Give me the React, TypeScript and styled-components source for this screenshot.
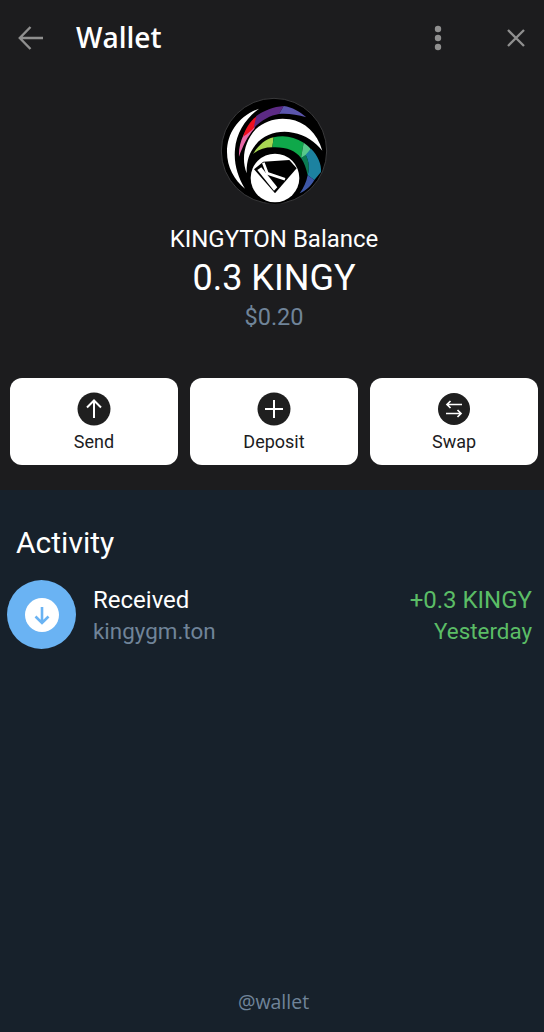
import React from "react";
import styled, { createGlobalStyle } from "styled-components";

const Global = createGlobalStyle`
  html, body { margin: 0; padding: 0; background: #17212b; }
  * { box-sizing: border-box; }
  #root { font-family: Roboto, sans-serif; }
`;

const Page = styled.div`
  width: 544px;
  height: 1032px;
  display: flex;
  flex-direction: column;
  overflow: hidden;
  background: #17212b;
`;

const Top = styled.section`
  height: 490px;
  background: #1c1c1e;
  display: flex;
  flex-direction: column;
`;

const Header = styled.header`
  height: 75px;
  display: flex;
  align-items: center;
  padding: 0 18px 0 18px;
`;

const HeaderIcon = styled.svg`
  display: block;
  flex: none;
  color: #8f8f8f;
`;

const HeaderTitle = styled.h1`
  flex: 1;
  margin: -2px 0 0 32px;
  color: #fff;
  font: 600 28px/32px "Open Sans", sans-serif;
`;

const CloseWrap = styled.span`
  display: block;
  margin-left: 64px;
`;

const Balance = styled.div`
  display: flex;
  flex-direction: column;
  align-items: center;
  padding: 17px 0 0 4px;
`;

const Logo = styled.svg`
  display: block;
  width: 118px;
  height: 118px;
`;

const BalanceLabel = styled.div`
  margin-top: 15px;
  color: #fff;
  font-size: 24px;
  line-height: 28px;
`;

const BalanceValue = styled.div`
  margin-top: 3px;
  color: #fff;
  font-size: 36px;
  line-height: 44px;
`;

const BalanceFiat = styled.div`
  margin-top: 3px;
  color: #708499;
  font-size: 23.5px;
  line-height: 28px;
`;

const Actions = styled.div`
  margin-top: 47px;
  padding: 0 6px 0 10px;
  display: grid;
  grid-template-columns: repeat(3, 168px);
  gap: 12px;
`;

const ActionCard = styled.button`
  height: 87px;
  border: 0;
  padding: 14px 0 0;
  border-radius: 12px;
  background: #fff;
  color: #1c1c1e;
  display: flex;
  flex-direction: column;
  align-items: center;
  font: 400 18px/22px Roboto, sans-serif;
`;

const ActionIcon = styled.svg`
  display: block;
  width: 34px;
  height: 34px;
  margin-bottom: 5px;
`;

const Activity = styled.section`
  flex: 1;
  display: flex;
  flex-direction: column;
  padding: 35px 12px 0 7px;
`;

const ActivityTitle = styled.h2`
  margin: 0 0 0 9px;
  color: #fff;
  font: 400 30px/36px Roboto, sans-serif;
`;

const Row = styled.div`
  margin-top: 19px;
  display: flex;
  align-items: center;
`;

const Avatar = styled.svg`
  display: block;
  flex: none;
  width: 69px;
  height: 69px;
`;

const RowMain = styled.div`
  flex: 1;
  margin-left: 17px;
`;

const RowSide = styled.div`
  text-align: right;
`;

const PrimaryLine = styled.div<{ $color: string }>`
  color: ${(p) => p.$color};
  font-size: 24px;
  line-height: 34px;
`;

const SecondaryLine = styled.div<{ $color: string }>`
  color: ${(p) => p.$color};
  font-size: 22.4px;
  line-height: 28px;
  margin-bottom: 2px;
`;

const Footer = styled.footer`
  margin-top: auto;
  margin-left: -7px;
  margin-right: -12px;
  padding: 0 0 18px 3px;
  text-align: center;
  color: #708499;
  font: 400 19.5px/24px "Open Sans", sans-serif;
`;

const BackIcon = () => (
  <HeaderIcon width="26" height="26" viewBox="0 0 26 26" fill="none" stroke="currentColor" strokeWidth="2.4">
    <path d="M25 13H2M12.5 2 1.8 13l10.7 11" />
  </HeaderIcon>
);

const MoreIcon = () => (
  <HeaderIcon width="8" height="26" viewBox="0 0 8 26" fill="currentColor">
    <circle cx="4" cy="4" r="3.2" />
    <circle cx="4" cy="13" r="3.2" />
    <circle cx="4" cy="22" r="3.2" />
  </HeaderIcon>
);

const CloseIcon = () => (
  <HeaderIcon width="20" height="20" viewBox="0 0 20 20" fill="none" stroke="currentColor" strokeWidth="2.3">
    <path d="M2 2l16 16M18 2 2 18" />
  </HeaderIcon>
);

const KingyLogo = () => (
  <Logo viewBox="0 0 354 354">
    <circle cx="177" cy="177" r="158" fill="#000" stroke="#3a3a3c" strokeWidth="3" />
    {/* outer white crescent */}
    <path d="M132 50C72 72 36 122 36 180c0 46 22 84 54 110C68 254 56 214 60 172 64 122 92 80 132 50Z" fill="#fff" />
    {/* coloured band */}
    <path d="M72 194C70 150 90 110 126 76L118 110C98 132 84 160 72 194Z" fill="#e668a7" />
    <path d="M84 134C92 108 106 86 126 72L122 102C112 114 98 126 84 134Z" fill="#ee0f1f" />
    <path d="M124 72C146 56 176 44 206 42L192 66C166 70 140 84 116 108Z" fill="#5c2a84" />
    <path d="M206 42C232 46 254 58 274 76 246 68 220 64 192 66Z" fill="#5b55ad" />
    {/* inner white crescent */}
    <path d="M95 244C78 200 88 150 122 112 150 86 186 76 224 82c46 8 82 40 98 94-22-26-50-48-88-54-42-8-86 4-112 36-20 24-28 52-27 86Z" fill="#fff" />
    {/* green band */}
    <path d="M114 186C130 160 150 142 176 136L172 166C150 166 130 172 114 186Z" fill="#a8d752" />
    <path d="M176 136C206 128 238 134 266 152L258 198C242 176 212 164 172 166Z" fill="#0fa84a" />
    <path d="M266 152C274 158 282 164 288 172L272 192 258 198Z" fill="#58c98a" />
    <path d="M258 198 272 188C282 208 284 228 278 250 274 230 268 212 258 198Z" fill="#0b7b52" />
    <path d="M272 188 288 170C308 190 320 216 318 240L298 264 278 250C284 228 282 208 272 188Z" fill="#1c82a0" />
    <path d="M278 250 298 264C288 282 272 296 254 304 266 288 274 270 278 250Z" fill="#3e58a8" />
    {/* badge */}
    <circle cx="180" cy="258" r="78" fill="#000" />
    <circle cx="180" cy="258" r="73" fill="#fff" />
    <path d="M117 232 145 209 223 204 245 229 180 304Z" fill="#000" />
    <path d="M127 234 139 226 187 286 177 296Z" fill="#fff" />
    <path d="M145 212 157 244 210 262" fill="none" stroke="#fff" strokeWidth="8" />
  </Logo>
);

const ArrowUp = () => (
  <ActionIcon viewBox="0 0 34 34" fill="none">
    <circle cx="17" cy="17" r="16.5" fill="#1f1f1f" />
    <path d="M17 26V9M10 15.5 17 8.5l7 7" stroke="#fff" strokeWidth="2" />
  </ActionIcon>
);

const Plus = () => (
  <ActionIcon viewBox="0 0 34 34" fill="none">
    <circle cx="17" cy="17" r="16.5" fill="#1f1f1f" />
    <path d="M17 8v18M8 17h18" stroke="#fff" strokeWidth="2" />
  </ActionIcon>
);

const SwapIcon = () => (
  <ActionIcon viewBox="0 0 34 34" fill="none">
    <circle cx="17" cy="17" r="16" fill="#1f1f1f" />
    <path d="M25 12.5H10M13.5 9 10 12.5l3.5 3.5M9 21.5h15M20.5 18 24 21.5 20.5 25" stroke="#fff" strokeWidth="1.7" />
  </ActionIcon>
);

const DownIcon = () => (
  <Avatar viewBox="0 0 69 69" fill="none">
    <circle cx="34.5" cy="34.5" r="34.5" fill="#6ab3f3" />
    <circle cx="35" cy="35" r="17" fill="#fff" />
    <path d="M35 27v15.5M28.5 36.5 35 43l6.5-6.5" stroke="#6ab3f3" strokeWidth="2.6" />
  </Avatar>
);

export default function App() {
  return (
    <Page>
      <Global />
      <Top>
        <Header>
          <BackIcon />
          <HeaderTitle>Wallet</HeaderTitle>
          <MoreIcon />
          <CloseWrap><CloseIcon /></CloseWrap>
        </Header>
        <Balance>
          <KingyLogo />
          <BalanceLabel>KINGYTON Balance</BalanceLabel>
          <BalanceValue>0.3 KINGY</BalanceValue>
          <BalanceFiat>$0.20</BalanceFiat>
        </Balance>
        <Actions>
          <ActionCard><ArrowUp />Send</ActionCard>
          <ActionCard><Plus />Deposit</ActionCard>
          <ActionCard><SwapIcon />Swap</ActionCard>
        </Actions>
      </Top>
      <Activity>
        <ActivityTitle>Activity</ActivityTitle>
        <Row>
          <DownIcon />
          <RowMain>
            <PrimaryLine $color="#fff">Received</PrimaryLine>
            <SecondaryLine $color="#708499">kingygm.ton</SecondaryLine>
          </RowMain>
          <RowSide>
            <PrimaryLine $color="#5bbd66">+0.3 KINGY</PrimaryLine>
            <SecondaryLine $color="#5bbd66">Yesterday</SecondaryLine>
          </RowSide>
        </Row>
        <Footer>@wallet</Footer>
      </Activity>
    </Page>
  );
}
